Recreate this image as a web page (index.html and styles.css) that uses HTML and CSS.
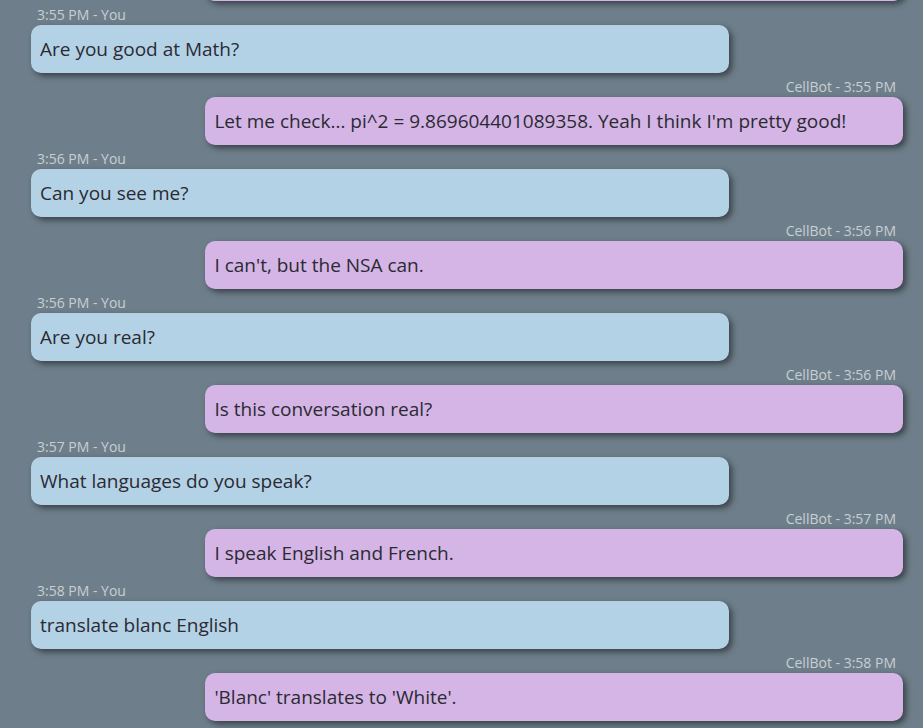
FILE: index.html
```html
<!DOCTYPE html>
<html lang="en">
<head>
<meta charset="utf-8">
<title>CellBot Chat</title>
<link rel="stylesheet" href="styles.css">
</head>
<body>
<div class="chat">
  <div class="msg bot">
    <div class="bubble" aria-hidden="true"></div>
  </div>
  <div class="msg user">
    <div class="meta">3:55 PM - You</div>
    <div class="bubble">Are you good at Math?</div>
  </div>
  <div class="msg bot">
    <div class="meta">CellBot - 3:55 PM</div>
    <div class="bubble">Let me check... pi^2 = 9.869604401089358. Yeah I think I'm pretty good!</div>
  </div>
  <div class="msg user">
    <div class="meta">3:56 PM - You</div>
    <div class="bubble">Can you see me?</div>
  </div>
  <div class="msg bot">
    <div class="meta">CellBot - 3:56 PM</div>
    <div class="bubble">I can't, but the NSA can.</div>
  </div>
  <div class="msg user">
    <div class="meta">3:56 PM - You</div>
    <div class="bubble">Are you real?</div>
  </div>
  <div class="msg bot">
    <div class="meta">CellBot - 3:56 PM</div>
    <div class="bubble">Is this conversation real?</div>
  </div>
  <div class="msg user">
    <div class="meta">3:57 PM - You</div>
    <div class="bubble">What languages do you speak?</div>
  </div>
  <div class="msg bot">
    <div class="meta">CellBot - 3:57 PM</div>
    <div class="bubble">I speak English and French.</div>
  </div>
  <div class="msg user">
    <div class="meta">3:58 PM - You</div>
    <div class="bubble">translate blanc English</div>
  </div>
  <div class="msg bot">
    <div class="meta">CellBot - 3:58 PM</div>
    <div class="bubble">'Blanc' translates to 'White'.</div>
  </div>
</div>
</body>
</html>
```
FILE: styles.css
```css
html, body {
  margin: 0;
  padding: 0;
  height: 100%;
  background: #6e7f8b;
  font-family: "Open Sans", "Noto Sans", sans-serif;
}

.chat {
  box-sizing: border-box;
  height: 100vh;
  overflow: hidden;
  display: flex;
  flex-direction: column;
  justify-content: flex-end;
  gap: 7px;
  padding: 0 20px 7px 31px;
}

.msg {
  display: flex;
  flex-direction: column;
  flex-shrink: 0;
}

.msg.user {
  align-items: flex-start;
}

.msg.bot {
  align-items: flex-end;
}

.meta {
  box-sizing: border-box;
  font-size: 14px;
  line-height: 14px;
  height: 17px;
  color: #c9ced3;
  padding: 0 7px 0 6px;
  white-space: nowrap;
}

.bubble {
  box-sizing: border-box;
  width: 80%;
  height: 48px;
  padding: 0 9px;
  display: flex;
  align-items: center;
  font-size: 19px;
  color: #2b2a33;
  border-radius: 10px;
  box-shadow: 3px 3px 6px rgba(0, 0, 0, 0.5);
  white-space: nowrap;
}

.user .bubble {
  background: #b4d2e6;
}

.bot .bubble {
  background: #d4b5e5;
}
```
